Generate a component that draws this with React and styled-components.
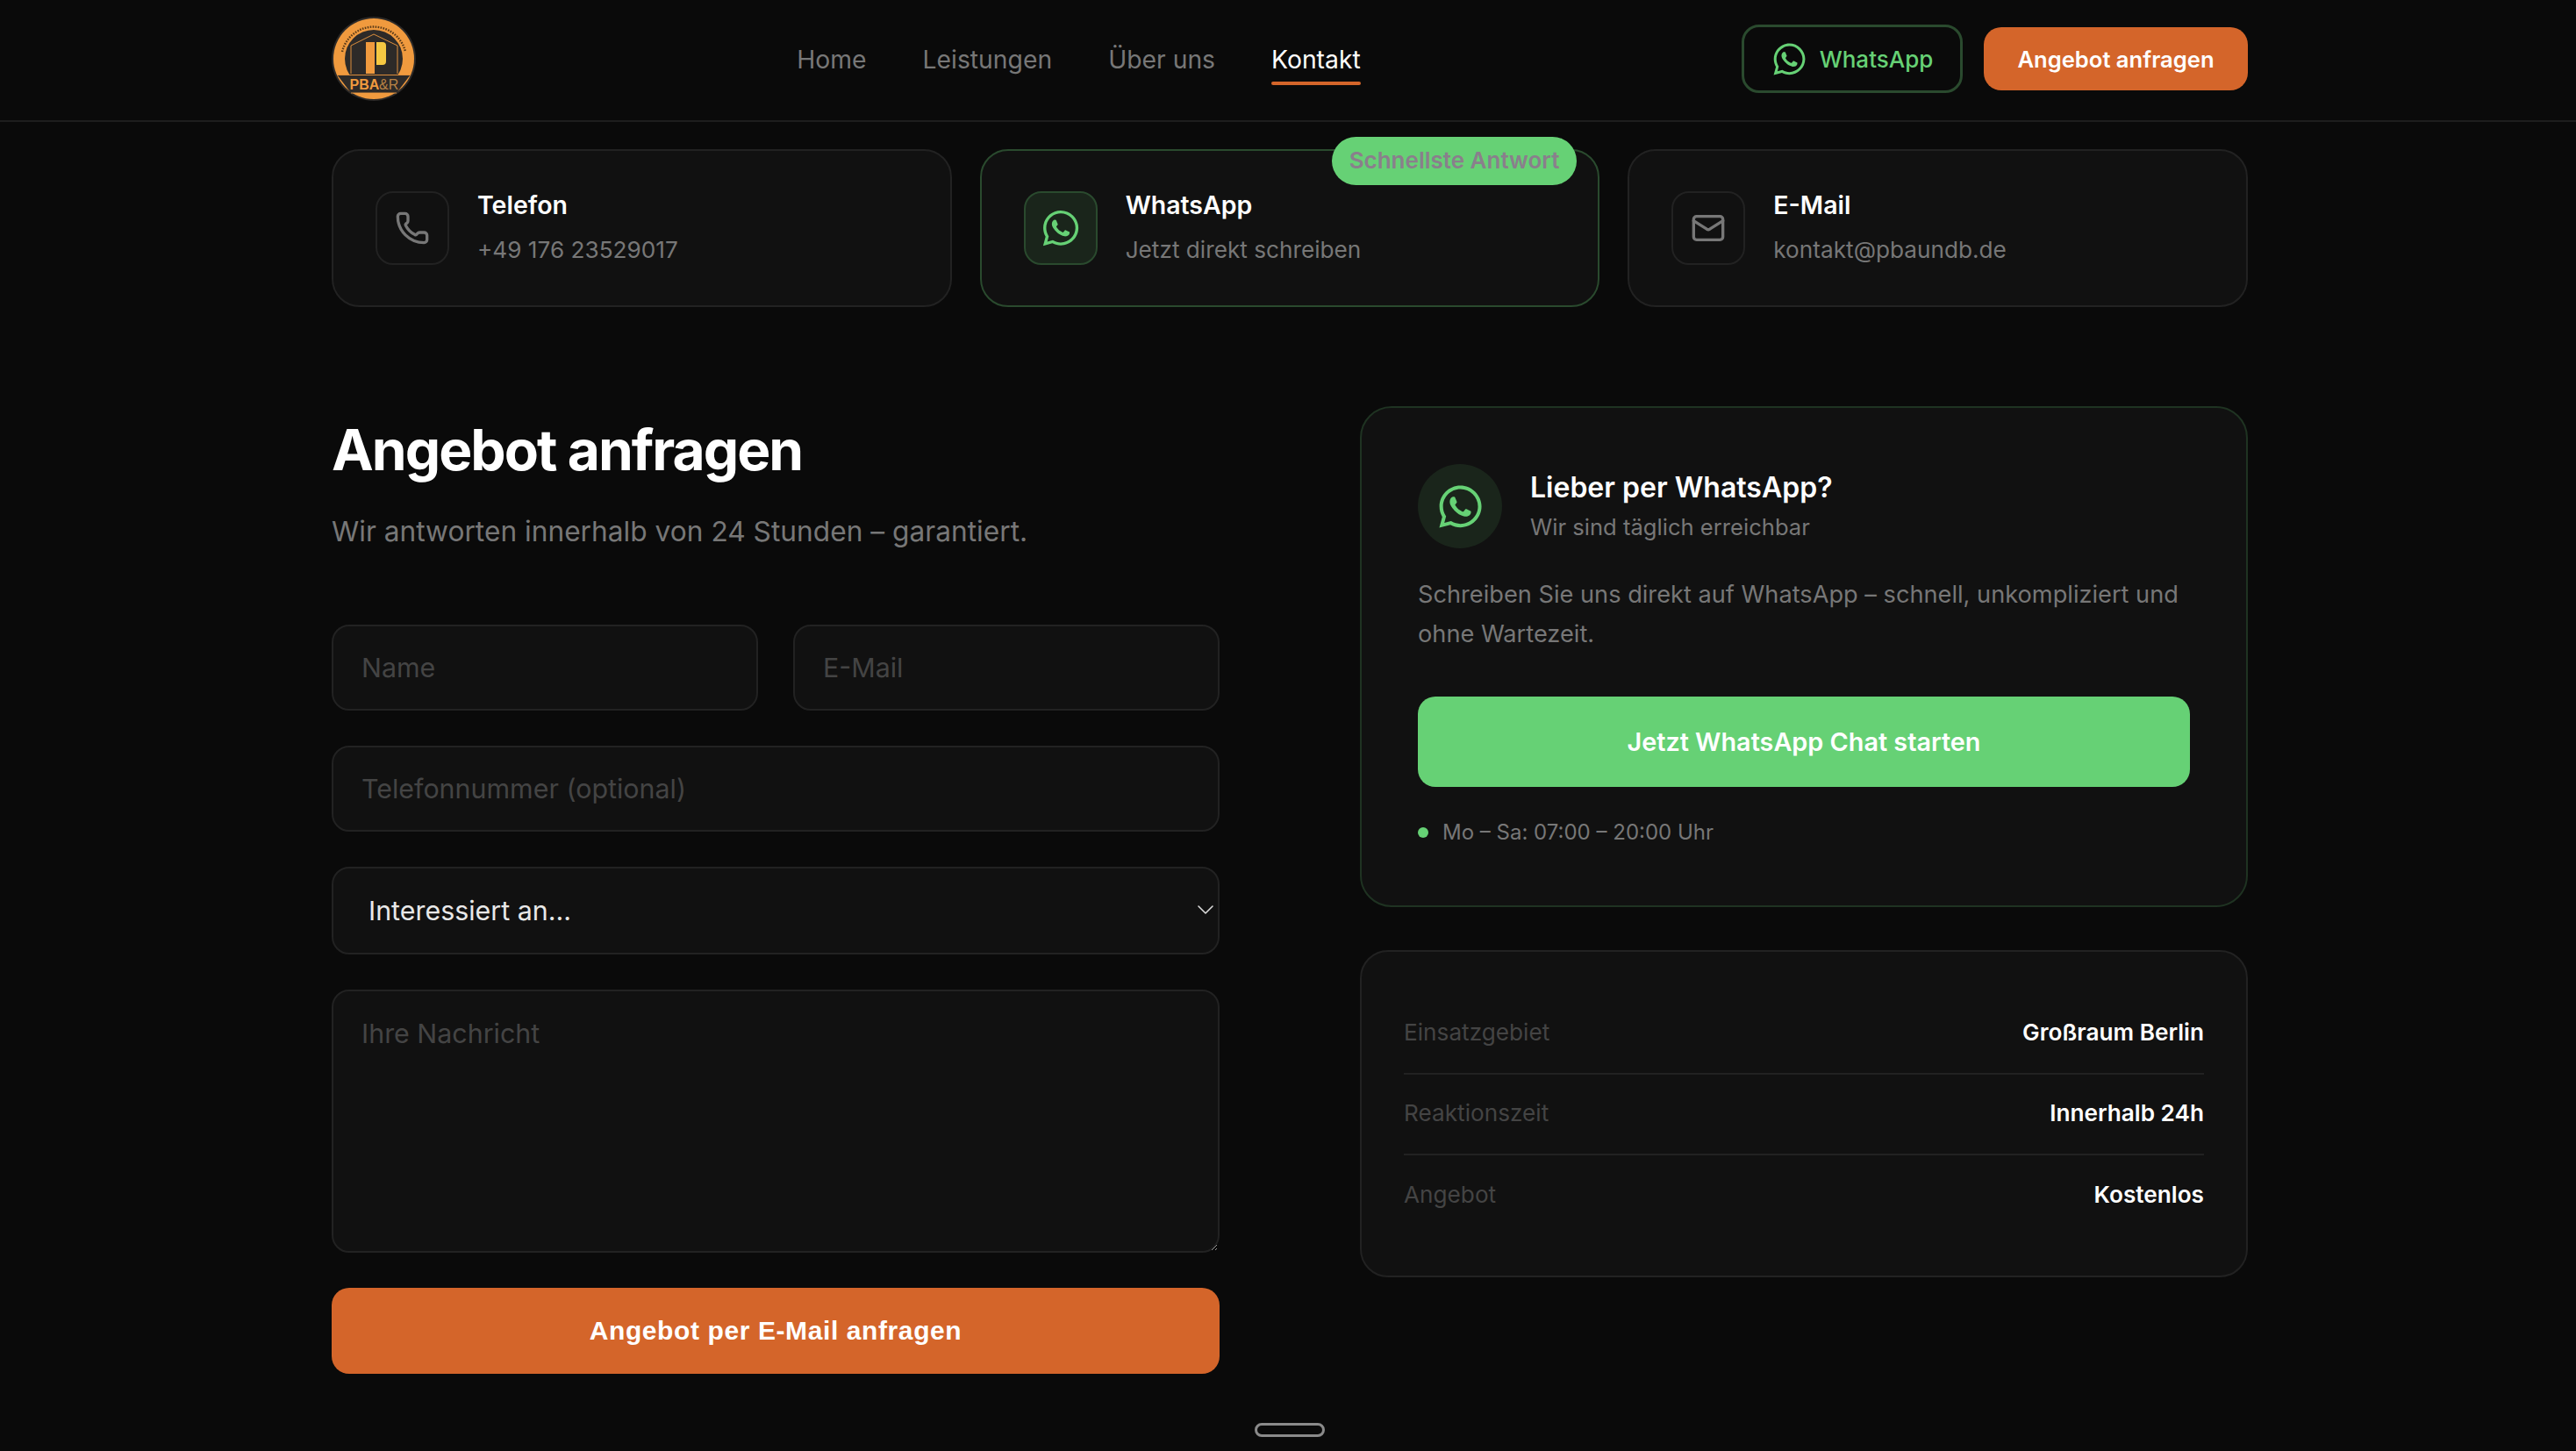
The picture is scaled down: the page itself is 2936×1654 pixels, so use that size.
import React from "react";
import styled, { createGlobalStyle } from "styled-components";
import { FaWhatsapp } from "react-icons/fa";
import { Phone, Mail, ChevronDown } from "lucide-react";

const color = {
    bg: "#0a0a0a",
    card: "#111111",
    border: "#222222",
    muted: "#777777",
    faint: "#444444",
    orange: "#d4652a",
    green: "#66d175",
    greenBorder: "#2a4a2e",
    greenSoft: "#1a251b",
};

const GlobalStyle = createGlobalStyle`
    * {
        box-sizing: border-box;
    }
    html, body {
        margin: 0;
        background: ${color.bg};
        overflow: hidden;
    }
    body {
        font-family: Inter, "Liberation Sans", sans-serif;
        color: #fff;
    }
`;

const Page = styled.div`
    min-height: 100vh;
    background: ${color.bg};
`;

const Wrap = styled.div`
    width: 2184px;
    margin-left: 378px;
`;

const Header = styled.header`
    height: 139px;
    padding-bottom: 3px;
    border-bottom: 2px solid #1e1e1e;
`;

const HeaderInner = styled(Wrap)`
    height: 100%;
    display: flex;
    align-items: center;
    justify-content: space-between;
`;

const Nav = styled.nav`
    display: flex;
    gap: 64px;
    margin-top: 2px;
`;

const NavLink = styled.a`
    position: relative;
    font-size: 28.3px;
    line-height: 36px;
    color: ${(props) => (props.$active ? "#fff" : color.muted)};

    &::after {
        content: "";
        display: ${(props) => (props.$active ? "block" : "none")};
        position: absolute;
        left: 0;
        right: 0;
        bottom: -11px;
        height: 4px;
        border-radius: 2px;
        background: ${color.orange};
    }
`;

const Actions = styled.div`
    display: flex;
    align-items: center;
    gap: 24px;
`;

const WhatsAppLink = styled.a`
    display: flex;
    align-items: center;
    justify-content: center;
    gap: 14px;
    width: 252px;
    height: 78px;
    border: 3px solid ${color.greenBorder};
    border-radius: 20px;
    font-size: 26px;
    font-weight: 500;
    color: ${color.green};
`;

const QuoteLink = styled.a`
    display: flex;
    align-items: center;
    justify-content: center;
    width: 301px;
    height: 72px;
    border-radius: 20px;
    background: ${color.orange};
    font-size: 25.6px;
    font-weight: 600;
    color: #fff;
`;

const ContactRow = styled(Wrap)`
    display: grid;
    grid-template-columns: repeat(3, 1fr);
    gap: 32px;
    padding-top: 31px;
`;

const ContactCard = styled.a`
    position: relative;
    display: flex;
    align-items: center;
    gap: 32px;
    height: 180px;
    padding: 0 48px;
    background: ${color.card};
    border: 2px solid ${(props) => (props.$highlight ? color.greenBorder : color.border)};
    border-radius: 32px;
`;

const IconBox = styled.div`
    flex: none;
    width: 84px;
    height: 84px;
    display: flex;
    align-items: center;
    justify-content: center;
    border-radius: 20px;
    border: 2px solid ${(props) => (props.$green ? color.greenBorder : color.border)};
    background: ${(props) => (props.$green ? color.greenSoft : "transparent")};
    color: ${(props) => (props.$green ? color.green : color.muted)};
`;

const ContactText = styled.div`
    display: flex;
    flex-direction: column;
    gap: 13px;
`;

const ContactTitle = styled.div`
    font-size: 28.5px;
    line-height: 36px;
    font-weight: 600;
`;

const ContactSub = styled.div`
    font-size: 26.2px;
    line-height: 40px;
    color: ${color.muted};
`;

const Badge = styled.span`
    position: absolute;
    top: -16px;
    right: 24px;
    height: 55px;
    padding: 0 20px 2px;
    display: flex;
    align-items: center;
    border-radius: 28px;
    background: ${color.green};
    font-size: 26px;
    font-weight: 600;
    color: #8a7f8c;
`;

const Main = styled(Wrap)`
    display: grid;
    grid-template-columns: 1fr 1fr;
    gap: 160px;
    padding-top: 113px;
`;

const Heading = styled.h1`
    margin: 12px 0 0;
    font-size: 64px;
    line-height: 76px;
    font-weight: 700;
    letter-spacing: -1.96px;
`;

const Lead = styled.p`
    margin: 30px 0 81px;
    font-size: 31.7px;
    line-height: 50px;
    color: ${color.muted};
`;

const Form = styled.form`
    display: flex;
    flex-direction: column;
    gap: 40px;
`;

const FieldRow = styled.div`
    display: grid;
    grid-template-columns: 1fr 1fr;
    gap: 40px;
`;

const Input = styled.input`
    width: 100%;
    height: 98px;
    padding: 0 32px;
    background: ${color.card};
    border: 2px solid ${color.border};
    border-radius: 20px;
    outline: none;
    font-family: inherit;
    font-size: 30.4px;
    color: #fff;

    &::placeholder {
        color: ${color.faint};
        opacity: 1;
    }
`;

const SelectWrap = styled.div`
    position: relative;
    color: #ddd;

    svg {
        position: absolute;
        top: 33px;
        right: 0;
        pointer-events: none;
    }
`;

const Select = styled.select`
    width: 100%;
    height: 100px;
    padding: 0 40px;
    appearance: none;
    background: ${color.card};
    border: 2px solid ${color.border};
    border-radius: 20px;
    outline: none;
    font-family: inherit;
    font-size: 30.4px;
    color: #e8e8e8;
`;

const Textarea = styled.textarea`
    display: block;
    width: 100%;
    height: 300px;
    padding: 30px 32px;
    background: ${color.card};
    border: 2px solid ${color.border};
    border-radius: 20px;
    outline: none;
    resize: vertical;
    font-family: inherit;
    font-size: 30.4px;
    line-height: 36px;
    color: #fff;

    &::placeholder {
        color: ${color.faint};
        opacity: 1;
    }
`;

const Submit = styled.button`
    height: 98px;
    border: none;
    border-radius: 20px;
    background: ${color.orange};
    font-family: "Liberation Sans", Arial, sans-serif;
    font-size: 30px;
    font-weight: 700;
    letter-spacing: 0.6px;
    color: #fff;
`;

const Side = styled.aside`
    display: flex;
    flex-direction: column;
    gap: 49px;
`;

const ChatCard = styled.section`
    height: 571px;
    padding: 64px;
    background: ${color.card};
    border: 2px solid #1f3322;
    border-radius: 36px;
`;

const ChatHead = styled.div`
    display: flex;
    align-items: center;
    gap: 32px;
`;

const ChatCircle = styled.div`
    flex: none;
    width: 96px;
    height: 96px;
    display: flex;
    align-items: center;
    justify-content: center;
    border-radius: 50%;
    background: ${color.greenSoft};
    color: ${color.green};
`;

const ChatTitle = styled.div`
    font-size: 32px;
    line-height: 42px;
    font-weight: 600;
`;

const ChatSub = styled.div`
    margin-top: 6px;
    font-size: 25.6px;
    line-height: 36px;
    color: ${color.muted};
`;

const ChatText = styled.p`
    margin: 30px 0 0;
    font-size: 27.2px;
    line-height: 45px;
    color: ${color.muted};
`;

const ChatButton = styled.a`
    display: flex;
    align-items: center;
    justify-content: center;
    height: 103px;
    margin-top: 49px;
    border-radius: 20px;
    background: ${color.green};
    font-size: 28.8px;
    font-weight: 600;
    color: #fff;
`;

const Hours = styled.div`
    display: flex;
    align-items: center;
    gap: 16px;
    margin-top: 34px;
    font-size: 24px;
    line-height: 36px;
    color: ${color.muted};
`;

const Dot = styled.span`
    width: 12px;
    height: 12px;
    border-radius: 50%;
    background: ${color.green};
`;

const FactsCard = styled.section`
    height: 373px;
    padding: 48px;
    background: ${color.card};
    border: 2px solid ${color.border};
    border-radius: 32px;
`;

const FactRow = styled.div`
    display: flex;
    align-items: center;
    justify-content: space-between;
    height: 92px;
    padding-bottom: 3px;
    font-size: 26.2px;
    border-bottom: 2px solid ${color.border};

    &:last-child {
        border-bottom: none;
    }
`;

const FactLabel = styled.span`
    color: ${color.faint};
`;

const FactValue = styled.span`
    font-weight: 600;
    color: #fff;
`;

const ScrollHint = styled.div`
    position: fixed;
    top: 1622px;
    left: 1430px;
    width: 80px;
    height: 16px;
    border: 3px solid #8a8a8a;
    border-radius: 8px;
`;

const Logo = () => (
    <svg width="96" height="96" viewBox="0 0 96 96" aria-label="PBA Logo">
        <circle cx="48" cy="48" r="48" fill="#2d2a28" />
        <circle cx="48" cy="48" r="46" fill="#f09a3e" />
        <path d="M12 40 A37 37 0 0 1 84 40" fill="none" stroke="#5a3a18" strokeWidth="2.4" strokeDasharray="1.6 1.4" />
        <circle cx="48" cy="48" r="33" fill="#2d2a28" />
        <path d="M6 66 H90 L74 87 H22 Z" fill="#2d2a28" />
        <path d="M6 66.5 H90 M22 87 H74" stroke="#f09a3e" strokeWidth="0.9" fill="none" />
        <path d="M22 65 V33 L48 20 L75 33 V65" fill="none" stroke="#f09a3e" strokeWidth="0.9" />
        <rect x="39" y="29" width="10" height="36" fill="#f09a3e" />
        <path d="M51 29 H58 Q62 29 62 33 V51 Q62 55 58 55 H51 Z" fill="#f5c842" />
        <text x="20.5" y="83" fontFamily="Liberation Sans, sans-serif" fontWeight="700" fontSize="16" fill="#f09a3e">
            PBA
        </text>
        <text x="54" y="83" fontFamily="Liberation Sans, sans-serif" fontSize="16" fill="#b98245">
            &amp;R
        </text>
    </svg>
);

const facts = [
    ["Einsatzgebiet", "Großraum Berlin"],
    ["Reaktionszeit", "Innerhalb 24h"],
    ["Angebot", "Kostenlos"],
];

export default function App() {
    return (
        <Page>
            <GlobalStyle />
            <Header>
                <HeaderInner>
                    <Logo />
                    <Nav>
                        <NavLink>Home</NavLink>
                        <NavLink>Leistungen</NavLink>
                        <NavLink>Über uns</NavLink>
                        <NavLink $active>Kontakt</NavLink>
                    </Nav>
                    <Actions>
                        <WhatsAppLink>
                            <FaWhatsapp size={41} />
                            WhatsApp
                        </WhatsAppLink>
                        <QuoteLink>Angebot anfragen</QuoteLink>
                    </Actions>
                </HeaderInner>
            </Header>

            <ContactRow>
                <ContactCard>
                    <IconBox>
                        <Phone size={40} />
                    </IconBox>
                    <ContactText>
                        <ContactTitle>Telefon</ContactTitle>
                        <ContactSub>+49 176 23529017</ContactSub>
                    </ContactText>
                </ContactCard>
                <ContactCard $highlight>
                    <Badge>Schnellste Antwort</Badge>
                    <IconBox $green>
                        <FaWhatsapp size={46} />
                    </IconBox>
                    <ContactText>
                        <ContactTitle>WhatsApp</ContactTitle>
                        <ContactSub>Jetzt direkt schreiben</ContactSub>
                    </ContactText>
                </ContactCard>
                <ContactCard>
                    <IconBox>
                        <Mail size={40} />
                    </IconBox>
                    <ContactText>
                        <ContactTitle>E-Mail</ContactTitle>
                        <ContactSub>kontakt@pbaundb.de</ContactSub>
                    </ContactText>
                </ContactCard>
            </ContactRow>

            <Main>
                <div>
                    <Heading>Angebot anfragen</Heading>
                    <Lead>Wir antworten innerhalb von 24 Stunden – garantiert.</Lead>
                    <Form>
                        <FieldRow>
                            <Input placeholder="Name" />
                            <Input placeholder="E-Mail" />
                        </FieldRow>
                        <Input placeholder="Telefonnummer (optional)" />
                        <SelectWrap>
                            <Select defaultValue="">
                                <option value="">Interessiert an...</option>
                            </Select>
                            <ChevronDown size={32} strokeWidth={1.2} />
                        </SelectWrap>
                        <Textarea placeholder="Ihre Nachricht" />
                        <Submit type="button">Angebot per E-Mail anfragen</Submit>
                    </Form>
                </div>
                <Side>
                    <ChatCard>
                        <ChatHead>
                            <ChatCircle>
                                <FaWhatsapp size={55} />
                            </ChatCircle>
                            <div>
                                <ChatTitle>Lieber per WhatsApp?</ChatTitle>
                                <ChatSub>Wir sind täglich erreichbar</ChatSub>
                            </div>
                        </ChatHead>
                        <ChatText>
                            Schreiben Sie uns direkt auf WhatsApp – schnell, unkompliziert und ohne Wartezeit.
                        </ChatText>
                        <ChatButton>Jetzt WhatsApp Chat starten</ChatButton>
                        <Hours>
                            <Dot />
                            Mo – Sa: 07:00 – 20:00 Uhr
                        </Hours>
                    </ChatCard>
                    <FactsCard>
                        {facts.map(([label, value]) => (
                            <FactRow key={label}>
                                <FactLabel>{label}</FactLabel>
                                <FactValue>{value}</FactValue>
                            </FactRow>
                        ))}
                    </FactsCard>
                </Side>
            </Main>
            <ScrollHint />
        </Page>
    );
}
